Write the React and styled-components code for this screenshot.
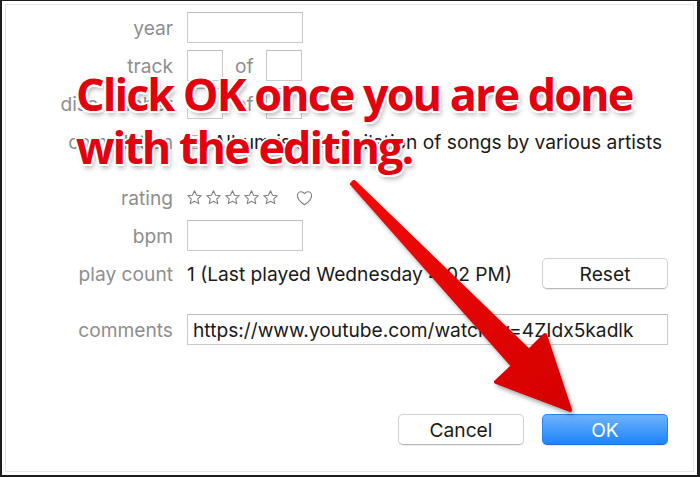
import React from 'react'
import styled, { createGlobalStyle } from 'styled-components'

const GlobalStyle = createGlobalStyle`
  html, body {
    margin: 0;
    padding: 0;
    background: #fff;
  }
  body {
    font-family: Inter, "Liberation Sans", sans-serif;
  }
`

const Window = styled.div`
  position: relative;
  box-sizing: border-box;
  width: 700px;
  height: 477px;
  border: 2px solid #1d1d1d;
  border-top-width: 1px;
  border-right-width: 3px;
  box-shadow: inset 0 0 0 3px #fff, inset 0 0 0 4px #e6e6e6;
  display: flex;
  flex-direction: column;
  padding: 11px 29px 30px 0;
  overflow: hidden;
  background: #fff;
`

const Form = styled.div`
  display: flex;
  flex-direction: column;
  gap: 7px;
`

const Row = styled.div`
  display: grid;
  grid-template-columns: 171px 1fr;
  column-gap: 14px;
  align-items: center;
  height: 31px;
  margin-bottom: ${p => p.$after || 0}px;
`

const Label = styled.div`
  text-align: right;
  color: #8e8e8e;
  font-size: 19.2px;
  white-space: nowrap;
`

const Field = styled.div`
  display: flex;
  align-items: center;
  justify-content: ${p => p.$spread ? 'space-between' : 'flex-start'};
  height: 100%;
`

const TextBox = styled.div`
  box-sizing: border-box;
  width: ${p => p.$w ? p.$w + 'px' : '100%'};
  height: 31px;
  border: 1px solid #c9c9c9;
  border-top-color: #bdbdbd;
  background: #fff;
  display: flex;
  align-items: center;
  padding: 0 5px;
  font-size: 19.2px;
  color: #1a1a1a;
  white-space: nowrap;
  overflow: hidden;
`

const Of = styled.span`
  color: #8e8e8e;
  font-size: 19.2px;
  margin: 0 ${p => p.$m || 0}px;
`

const Value = styled.span`
  font-size: 19.2px;
  color: #1a1a1a;
  white-space: nowrap;
`

const Check = styled.span`
  box-sizing: border-box;
  width: 14px;
  height: 14px;
  border: 1px solid #b5b5b5;
  border-radius: 3px;
  background: #fff;
  margin-right: 12px;
  flex: none;
`

const Stars = styled.div`
  display: flex;
  align-items: center;
  gap: 2px;
  margin-left: -1px;
`

const HeartWrap = styled.span`
  display: flex;
  margin-left: 17px;
`

const PushButton = styled.button`
  box-sizing: border-box;
  width: 126px;
  height: 31px;
  border-radius: 5px;
  font-family: Inter, "Liberation Sans", sans-serif;
  font-size: 19.2px;
  padding: 0;
  cursor: default;
  color: ${p => p.$primary ? '#fff' : '#1a1a1a'};
  border: 1px solid ${p => p.$primary ? '#2a80f0' : '#d0d0d0'};
  border-bottom-color: ${p => p.$primary ? '#1a6be0' : '#b9b9b9'};
  background: ${p => p.$primary
    ? 'linear-gradient(#6db3fb, #1f84fb)'
    : '#fff'};
  box-shadow: 0 1px 1px rgba(0, 0, 0, 0.08);
`

const ButtonBar = styled.div`
  margin-top: auto;
  display: flex;
  justify-content: flex-end;
  gap: 18px;
`

const Callout = styled.div`
  position: absolute;
  left: 74px;
  top: 66px;
  font-family: "Open Sans", "Noto Sans", sans-serif;
  font-weight: 700;
  font-size: 45px;
  letter-spacing: -2px;
  line-height: 53px;
  color: #e3000f;
  white-space: nowrap;
  text-shadow:
    2px 0 0 #fff, -2px 0 0 #fff, 0 2px 0 #fff, 0 -2px 0 #fff,
    1.5px 1.5px 0 #fff, -1.5px 1.5px 0 #fff, 1.5px -1.5px 0 #fff, -1.5px -1.5px 0 #fff,
    2px 4px 5px rgba(0, 0, 0, 0.32);
`

const ArrowLayer = styled.svg`
  position: absolute;
  left: -2px;
  top: -1px;
  width: 700px;
  height: 477px;
  pointer-events: none;
  filter: drop-shadow(2px 3px 2px rgba(0, 0, 0, 0.35));
`

const Star = () => (
  <svg width="17" height="17" viewBox="0 0 24 24" fill="none" stroke="#7d7d7d" strokeWidth="1.5" strokeLinejoin="round">
    <path d="M12 2.5l2.9 6.2 6.7.7-5 4.6 1.4 6.7L12 17.3l-6 3.4 1.4-6.7-5-4.6 6.7-.7z" />
  </svg>
)

const Heart = () => (
  <svg width="17" height="16" viewBox="0 0 24 22" fill="none" stroke="#7d7d7d" strokeWidth="1.6" strokeLinejoin="round">
    <path d="M12 20.5S2 14.3 2 7.6C2 4.6 4.3 2.2 7.2 2.2c2 0 3.7 1.1 4.8 2.8 1.1-1.7 2.8-2.8 4.8-2.8 2.9 0 5.2 2.4 5.2 5.4 0 6.7-10 12.9-10 12.9z" />
  </svg>
)

export default function App() {
  return (
    <>
      <GlobalStyle />
      <Window>
        <Form>
          <Row>
            <Label>year</Label>
            <Field><TextBox $w={116} /></Field>
          </Row>
          <Row>
            <Label>track</Label>
            <Field>
              <TextBox $w={36} />
              <Of $m={12}>of</Of>
              <TextBox $w={36} />
            </Field>
          </Row>
          <Row>
            <Label>disc number</Label>
            <Field>
              <TextBox $w={36} />
              <Of $m={12}>of</Of>
              <TextBox $w={36} />
            </Field>
          </Row>
          <Row $after={18}>
            <Label>compilation</Label>
            <Field>
              <Check />
              <Value>Album is a compilation of songs by various artists</Value>
            </Field>
          </Row>
          <Row>
            <Label>rating</Label>
            <Field>
              <Stars>
                <Star /><Star /><Star /><Star /><Star />
              </Stars>
              <HeartWrap><Heart /></HeartWrap>
            </Field>
          </Row>
          <Row>
            <Label>bpm</Label>
            <Field><TextBox $w={116} /></Field>
          </Row>
          <Row $after={18}>
            <Label>play count</Label>
            <Field $spread>
              <Value>1 (Last played Wednesday 4:02 PM)</Value>
              <PushButton>Reset</PushButton>
            </Field>
          </Row>
          <Row>
            <Label>comments</Label>
            <Field>
              <TextBox>https://www.youtube.com/watch?v=4ZIdx5kadlk</TextBox>
            </Field>
          </Row>
        </Form>
        <ButtonBar>
          <PushButton>Cancel</PushButton>
          <PushButton $primary>OK</PushButton>
        </ButtonBar>

        <ArrowLayer viewBox="0 0 700 477">
          <defs>
            <linearGradient id="arrowRed" x1="0" y1="0" x2="1" y2="1">
              <stop offset="0" stopColor="#f20a0a" />
              <stop offset="1" stopColor="#d60000" />
            </linearGradient>
          </defs>
          <polygon
            points="354,182 529,351 545,335 570,410 496,382 513,366 352,184"
            fill="url(#arrowRed)"
            stroke="url(#arrowRed)"
            strokeWidth="4"
            strokeLinejoin="round"
          />
        </ArrowLayer>

        <Callout>
          Click OK once you are done<br />
          with the editing.
        </Callout>
      </Window>
    </>
  )
}
